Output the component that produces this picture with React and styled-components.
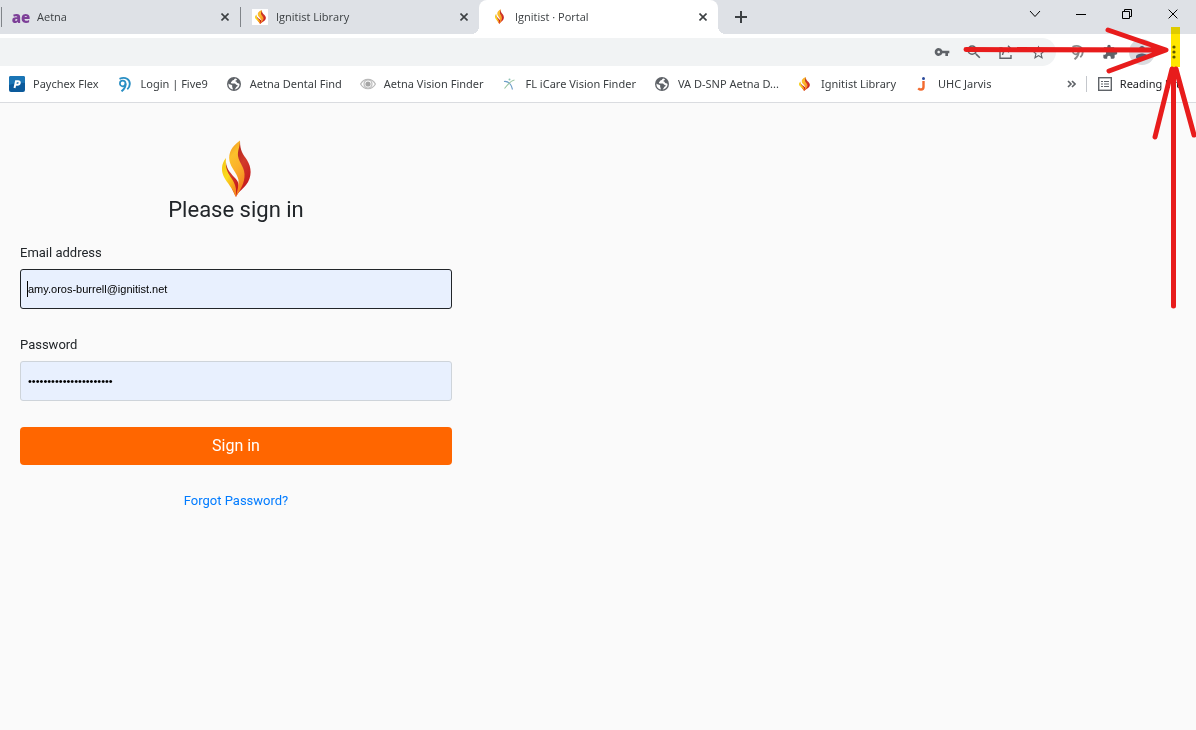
import React from 'react'
import styled, { createGlobalStyle } from "styled-components";
import { MdVpnKey, MdExtension, MdStarBorder, MdSearch, MdPerson } from "react-icons/md";

const GlobalStyle = createGlobalStyle`
*{
  box-sizing:border-box;
}
body{
  margin:0;
  background:#fafafa;
  color:#212529;
  font-family:Roboto, "Liberation Sans", sans-serif;
}
`

const Flame = ({ width, height }) => (
  <svg width={width} height={height} viewBox="0 0 29 57" preserveAspectRatio="none" aria-hidden="true">
    <defs>
      <linearGradient id="flameGold" x1="0" y1="0" x2="0.3" y2="1">
        <stop offset="0" stopColor="#f08a1d" />
        <stop offset="0.3" stopColor="#fcc12c" />
        <stop offset="0.6" stopColor="#fbb02a" />
        <stop offset="1" stopColor="#f58220" />
      </linearGradient>
      <linearGradient id="flameYellow" x1="0" y1="0" x2="0.7" y2="1">
        <stop offset="0" stopColor="#f3c417" />
        <stop offset="0.5" stopColor="#fbdc1b" />
        <stop offset="1" stopColor="#f58a1f" />
      </linearGradient>
      <linearGradient id="flameRed" x1="0" y1="0" x2="0.4" y2="1">
        <stop offset="0" stopColor="#a81e1c" />
        <stop offset="0.5" stopColor="#d23a2a" />
        <stop offset="1" stopColor="#c4161c" />
      </linearGradient>
    </defs>
    <path d="M4 18C3 28 8 32 12 37C18 42 18 48 14 57C10 48 2 36 4 18Z" fill="url(#flameRed)" />
    <path d="M4 18C-1 24-1 31 2 37C5 43 11 48 13.500 57C15 51 14 45 10 39C5.500 33 3 28 4 18Z" fill="url(#flameYellow)" />
    <path d="M18 1C18 11 21 14 25 20C30 28 30 37 24 45C20 50 16 52 14 57C16 50 20 43 17 33C12 20 13 12 18 1Z" fill="url(#flameRed)" />
    <path d="M18 .5C10 6 6 13 7.500 21C9 28 15 33 16.500 40C17 46 15 51 14 57C18 50 23 43 22.500 34C22 26 17.500 24 16 16C15.500 10 18 7 18 .5Z" fill="url(#flameGold)" />
  </svg>
)

const Five9 = ({ color = "#2a8fc4" }) => (
  <svg width="16" height="16" viewBox="0 0 16 16" fill="none" stroke={color} aria-hidden="true">
    <circle cx="5.700" cy="7.500" r="2.800" strokeWidth="1.700" />
    <path d="M8.600 7.500C8.800 11 6.800 13.500 4.500 15.300" strokeWidth="2" />
    <path d="M2.500 2.800C8.500.2 13 3.500 12.800 8C12.700 10.500 11.800 12 10.300 13.300" strokeWidth="1.900" />
  </svg>
)

const Globe = () => (
  <svg width="16" height="16" viewBox="0 0 16 16" aria-hidden="true">
    <circle cx="8" cy="8" r="7" fill="#5f6368" />
    <path d="M9.500 2.500C8 2.700 8.600 4 7 4.200C6 4.300 6.200 5.600 5.200 6C4.600 6.300 5 7.400 5.800 7.400H8.700C9.800 7.400 9.600 9 11 9C12 9 11.800 10.300 10.800 10.600C9.800 11 10 12.400 8.600 13.400C12 13.300 13.600 10.500 13.500 8C13.300 7.500 12.800 7.300 12 7.300C10.600 7.300 11 5.800 9.900 5.600C9 5.400 9.300 4.300 10.400 4.200C11.300 4 11.200 3 9.500 2.500ZM2.500 7.400C3.500 8.600 5 8.300 6 9.200C6.800 10 5.600 10.600 6.400 11.500C6.900 12.200 6.700 12.900 6.900 13.400C4 13 2.200 10.500 2.500 7.400Z" fill="#fff" />
  </svg>
)

const Paychex = () => (
  <svg width="16" height="16" viewBox="0 0 16 16" aria-hidden="true">
    <rect width="16" height="16" rx="2" fill="#0b5a9b" />
    <path d="M0 2Q0 0 2 0H14Q16 0 16 2V7Q8 6 0 9Z" fill="#1a75b5" />
    <path d="M5.500 12L7 5.200H9C11.700 5.200 11.200 8.700 8.400 8.700H6.500" fill="none" stroke="#fff" strokeWidth="2" />
  </svg>
)

const Eye = () => (
  <svg width="16" height="16" viewBox="0 0 16 16" fill="none" stroke="#b9b9b9" aria-hidden="true">
    <path d="M.6 8C4 1.700 12 1.700 15.400 8C12 14.300 4 14.300.6 8Z" strokeWidth="1.200" />
    <circle cx="8" cy="8" r="4" strokeWidth="1.200" />
    <circle cx="8" cy="8" r="2.600" fill="#a5a5a5" stroke="none" />
  </svg>
)

const Care = () => (
  <svg width="16" height="16" viewBox="0 0 16 16" fill="none" aria-hidden="true">
    <path d="M2 5.500C5 5 7 6.500 8.500 8.500C9.800 10.300 10 12 10.500 13.500" stroke="#6f9fc8" strokeWidth="1.200" />
    <path d="M12.500 4C9 4.500 6 8 2.500 12.500" stroke="#9cc7a4" strokeWidth="1.200" />
    <circle cx="7.500" cy="3.600" r="1" fill="#8fc2b5" />
  </svg>
)

const Jarvis = () => (
  <svg width="16" height="16" viewBox="0 0 16 16" fill="none" aria-hidden="true">
    <path d="M9.500 5V11Q9.500 13.500 7 13.500Q5.500 13.500 4.200 12.300" stroke="#f26a2e" strokeWidth="2.400" />
    <circle cx="9.500" cy="2.500" r="1.500" fill="#2b4a9b" />
  </svg>
)

const Share = () => (
  <svg width="16" height="16" viewBox="0 0 16 16" fill="none" stroke="#5f6368" strokeWidth="1.400" aria-hidden="true">
    <path d="M4.500 4H2V14.300H13V11" />
    <path d="M4.500 11C5 7 7.500 5 12.500 5M10 1.800L13.300 5L10 8.200" />
  </svg>
)

const ReadingList = () => (
  <svg width="14" height="14" viewBox="0 0 14 14" fill="none" stroke="#5f6368" aria-hidden="true">
    <rect x=".7" y=".7" width="12.600" height="12.600" strokeWidth="1.400" />
    <path d="M3 4.500H5M6 4.500H11M3 7H5M6 7H11M3 9.500H5M6 9.500H11" strokeWidth="1.200" />
  </svg>
)

const Cross = ({ size = 8, color = "#3c4043", weight = 1.6 }) => (
  <svg width={size} height={size} viewBox="0 0 8 8" stroke={color} strokeWidth={weight * 8 / size} aria-hidden="true">
    <path d="M.5.5L7.500 7.500M7.500.5L.5 7.500" />
  </svg>
)

const tabs = [
  { title: "Aetna", icon: <AetnaMark /> },
  { title: "Ignitist Library", icon: <Flame width={11} height={14} />, boxed: true },
  { title: "Ignitist · Portal", icon: <Flame width={9} height={15} />, active: true },
]

const bookmarks = [
  { title: "Paychex Flex", icon: <Paychex /> },
  { title: "Login | Five9", icon: <Five9 /> },
  { title: "Aetna Dental Find", icon: <Globe /> },
  { title: "Aetna Vision Finder", icon: <Eye /> },
  { title: "FL iCare Vision Finder", icon: <Care /> },
  { title: "VA D-SNP Aetna D...", icon: <Globe /> },
  { title: "Ignitist Library", icon: <Flame width={11} height={14} /> },
  { title: "UHC Jarvis", icon: <Jarvis /> },
]

function AetnaMark() {
  return <Wordmark>ae</Wordmark>
}

const App = () => {
  return (
    <Page>
      <GlobalStyle />
      <TabStrip>
        {
          tabs.map((tab) => {
            return <Tab key={tab.title} $active={tab.active}>
              <Favicon $boxed={tab.boxed}>{tab.icon}</Favicon>
              <TabTitle>{tab.title}</TabTitle>
              <TabClose aria-label={`Close ${tab.title}`}><Cross /></TabClose>
            </Tab>
          })
        }
        <NewTab aria-label="New tab">
          <svg width="12" height="12" viewBox="0 0 12 12" stroke="#3c4043" strokeWidth="2"><path d="M6 0V12M0 6H12" /></svg>
        </NewTab>
        <WindowControls>
          <WindowButton aria-label="Search tabs">
            <svg width="12" height="8" viewBox="0 0 12 8" fill="none" stroke="#000"><path d="M1 1L6 6.500L11 1" /></svg>
          </WindowButton>
          <WindowButton aria-label="Minimize">
            <svg width="10" height="10" viewBox="0 0 10 10" stroke="#000"><path d="M0 5.500H10" /></svg>
          </WindowButton>
          <WindowButton aria-label="Restore">
            <svg width="10" height="10" viewBox="0 0 10 10" fill="none" stroke="#000"><path d="M.5 2.500H7.500V9.500H.5ZM2.500 2.500V.5H9.500V7.500H7.500" /></svg>
          </WindowButton>
          <WindowButton aria-label="Close window"><Cross size={10} color="#000" weight={1} /></WindowButton>
        </WindowControls>
      </TabStrip>

      <Toolbar>
        <Omnibox>
          <IconButton aria-label="Saved password"><MdVpnKey size={16} /></IconButton>
          <IconButton aria-label="Zoom"><MdSearch size={18} /></IconButton>
          <IconButton aria-label="Share"><Share /></IconButton>
          <IconButton aria-label="Bookmark this page"><MdStarBorder size={17} /></IconButton>
        </Omnibox>
        <IconButton aria-label="Five9"><Five9 color="#8a8a8a" /></IconButton>
        <IconButton aria-label="Extensions"><MdExtension size={16} /></IconButton>
        <IconButton aria-label="Profile"><Avatar><MdPerson size={18} /></Avatar></IconButton>
        <IconButton aria-label="Menu">
          <svg width="4" height="14" viewBox="0 0 4 14" fill="#5f6368"><circle cx="2" cy="2" r="1.600" /><circle cx="2" cy="7" r="1.600" /><circle cx="2" cy="12" r="1.600" /></svg>
        </IconButton>
      </Toolbar>

      <BookmarkBar>
        {
          bookmarks.map((item, index) => {
            return <Bookmark href="#" key={index}>
              <Favicon>{item.icon}</Favicon>
              {item.title}
            </Bookmark>
          })
        }
        <BookmarkEnd>
          <More aria-label="More bookmarks">
            <svg width="9" height="8" viewBox="0 0 9 8" fill="none" stroke="#5f6368" strokeWidth="1.600"><path d="M1 1L4 4L1 7M5 1L8 4L5 7" /></svg>
          </More>
          <Reading><ReadingList />Reading list</Reading>
        </BookmarkEnd>
      </BookmarkBar>

      <SignIn onSubmit={(e) => e.preventDefault()}>
        <Flame width={29} height={57} />
        <Title>Please sign in</Title>
        <Label htmlFor="email">Email address</Label>
        <Field $caret>
          <Input id="email" type="email" defaultValue="amy.oros-burrell@ignitist.net" $active />
        </Field>
        <Label htmlFor="password">Password</Label>
        <Field>
          <Input id="password" type="password" defaultValue="ignitistignitistportal" />
        </Field>
        <Submit type="submit">Sign in</Submit>
        <Forgot href="#">Forgot Password?</Forgot>
      </SignIn>

      <Highlight />
      <Arrows width="236" height="290" viewBox="0 0 236 290" fill="none" stroke="#e81c1c" strokeWidth="5" strokeLinecap="round" strokeLinejoin="round" aria-hidden="true">
        <path d="M6 29.500L206 30M148 10L206 30L149 51" />
        <path d="M213.500 286V50M195 117L212 49M216 49L234 115" />
      </Arrows>
    </Page>
  )
}

export default App;

const Page=styled.div`
position:relative;
overflow:hidden;
min-height:100vh;
`

const TabStrip=styled.div`
display:flex;
height:34px;
padding-left:1px;
background:#dee1e6;
font-family:"Open Sans", "Noto Sans", sans-serif;
font-size:11px;
color:#3c4043;
`

const Tab=styled.div`
position:relative;
display:flex;
align-items:center;
flex:0 1 239px;
padding:0 10px 1px 12px;
border-radius:8px 8px 0 0;
background:${(p) => p.$active ? "white" : "transparent"};

&::before{
  content:"";
  position:absolute;
  ${(p) => p.$active ? `
  left:-8px;
  bottom:0;
  width:8px;
  height:8px;
  background:radial-gradient(circle at 0 0, transparent 8px, white 8px);
  ` : `
  left:0;
  top:7px;
  width:1px;
  height:20px;
  background:#808489;
  `}
}

&::after{
  content:"";
  display:${(p) => p.$active ? "block" : "none"};
  position:absolute;
  right:-8px;
  bottom:0;
  width:8px;
  height:8px;
  background:radial-gradient(circle at 100% 0, transparent 8px, white 8px);
}
`

const Favicon=styled.span`
display:flex;
align-items:center;
justify-content:center;
flex:none;
width:16px;
height:16px;
background:${(p) => p.$boxed ? "white" : "transparent"};
`

const Wordmark=styled.span`
color:#7d3f98;
font:800 15px/16px "Open Sans", sans-serif;
`

const TabTitle=styled.span`
flex:1;
margin-left:8px;
white-space:nowrap;
overflow:hidden;
`

const Button=styled.button`
display:flex;
align-items:center;
justify-content:center;
padding:0;
border:0;
background:none;
color:#5f6368;
`

const TabClose=styled(Button)`
width:10px;
height:16px;
`

const NewTab=styled(Button)`
width:28px;
margin-left:9px;
`

const WindowControls=styled.div`
display:flex;
height:28px;
margin-left:auto;
`

const WindowButton=styled(Button)`
width:46px;
`

const Toolbar=styled.div`
display:flex;
align-items:center;
height:36px;
padding-right:6px;
background:white;
`

const Omnibox=styled.div`
display:flex;
justify-content:flex-end;
flex:1;
height:28px;
margin-right:6px;
padding-right:2px;
border-radius:0 14px 14px 0;
background:#f1f3f4;
`

const IconButton=styled(Button)`
width:32px;
height:28px;
`

const Avatar=styled.span`
display:flex;
align-items:center;
justify-content:center;
width:26px;
height:26px;
border-radius:50%;
background:#dadce0;
color:#566074;
`

const BookmarkBar=styled.div`
display:flex;
align-items:center;
gap:18px;
height:33px;
padding:0 16px 5px 9px;
border-bottom:1px solid #dadce0;
background:white;
font-family:"Noto Sans", "Open Sans", sans-serif;
font-size:11px;
`

const Bookmark=styled.a`
display:flex;
align-items:center;
gap:8px;
color:#3c4043;
text-decoration:none;
white-space:nowrap;
`

const BookmarkEnd=styled.div`
display:flex;
align-items:center;
gap:10px;
margin-left:auto;
`

const More=styled(Button)`
height:16px;
`

const Reading=styled(Button)`
gap:8px;
height:16px;
padding-left:11px;
border-left:1px solid #c4c7cc;
color:#202124;
font:inherit;
white-space:nowrap;
`

const SignIn=styled.form`
display:flex;
flex-direction:column;
align-items:center;
max-width:472px;
padding:37px 20px 0;
`

const Title=styled.h1`
margin:0 0 20px;
font-size:22px;
line-height:26px;
font-weight:400;
`

const Label=styled.label`
align-self:flex-start;
margin-bottom:6px;
font-size:13px;
line-height:20px;
`

const Field=styled.div`
position:relative;
width:100%;
margin-bottom:26px;

&::after{
  content:"";
  display:${(p) => p.$caret ? "block" : "none"};
  position:absolute;
  left:7px;
  top:12px;
  width:1px;
  height:16px;
  background:black;
}
`

const Input=styled.input`
display:block;
width:100%;
height:40px;
padding:1px 7px;
border:1px solid ${(p) => p.$active ? "#212529" : "#ced4da"};
border-radius:3px;
background:#e8f0fe;
color:black;
font:11px "Liberation Sans", Arial, sans-serif;
`

const Submit=styled.button`
width:100%;
height:38px;
margin-bottom:26px;
padding:0 0 2px;
border:0;
border-radius:4px;
background:#ff6600;
color:white;
font:400 16px Roboto, sans-serif;
`

const Forgot=styled.a`
font-size:13px;
line-height:20px;
color:#007bff;
text-decoration:none;
`

const Highlight=styled.div`
position:absolute;
top:27px;
right:16px;
width:9px;
height:40px;
background:#ffe600;
mix-blend-mode:multiply;
`

const Arrows=styled.svg`
position:absolute;
top:20px;
right:0;
pointer-events:none;
`
